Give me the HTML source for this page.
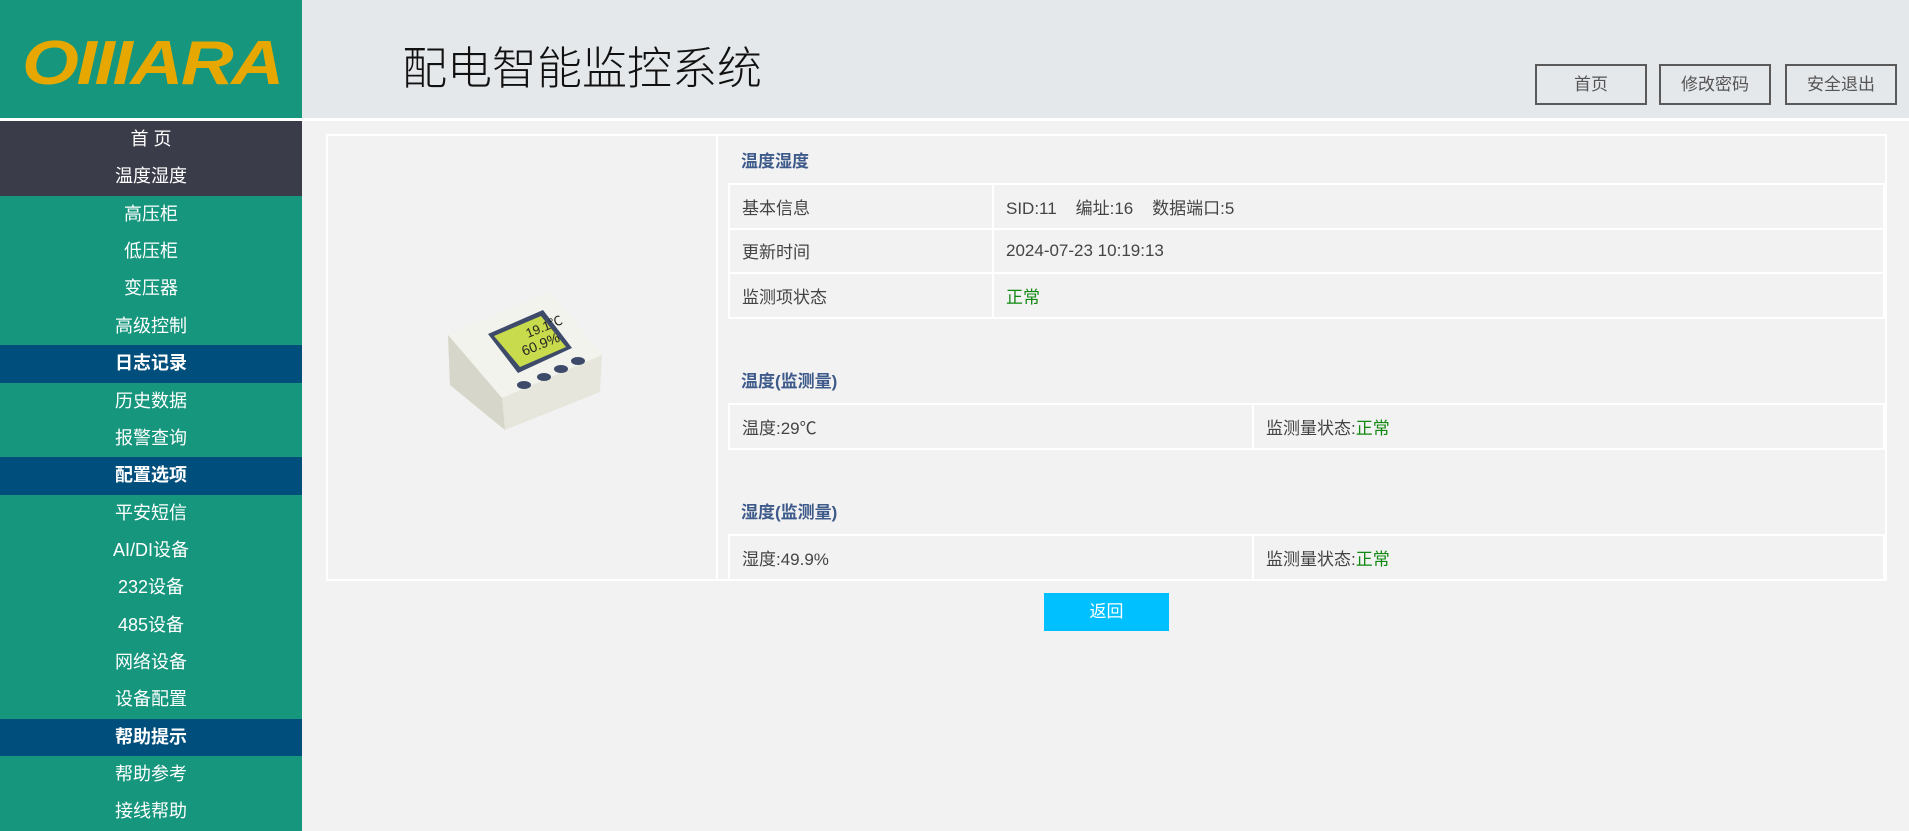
<!DOCTYPE html>
<html><head><meta charset="utf-8"><style>
*{margin:0;padding:0;box-sizing:border-box}
body{width:1909px;height:831px;overflow:hidden;background:#f2f2f2;font-family:"Liberation Sans","Noto Sans CJK SC",sans-serif;position:relative}
.side{position:absolute;left:0;top:0;width:302px;height:831px;background:#16967d}
.logo{position:absolute;left:0;top:0;width:302px;height:118px;background:#16967d}
.logo span{position:absolute;left:22px;top:28px;font:italic bold 62px "Liberation Sans",sans-serif;color:#e6a800;letter-spacing:-2px;transform:scaleX(1.18);transform-origin:left}
.sep{position:absolute;left:0;top:118px;width:1909px;height:3px;background:#fff}
.menu{position:absolute;left:0;top:121px;width:302px}
.menu div{height:37.37px;line-height:37px;text-align:center;color:#fff;font-size:18px}
.menu .d{background:#3b3c4a}
.menu .h{background:#004e7c;font-weight:bold}
.head{position:absolute;left:302px;top:0;width:1607px;height:118px;background:#e5e8eb}
.title{position:absolute;left:402px;top:32px;font-size:45px;color:#111;font-family:"Noto Sans CJK SC",sans-serif;font-weight:300}
.btn{position:absolute;top:64px;width:112px;height:41px;border:2px solid #5a5a5a;text-align:center;line-height:37px;font-size:17px;color:#555}
.box{position:absolute;left:326px;top:134px;width:1561px;height:447px;border:2px solid #fff}
.vl{position:absolute;left:716px;top:134px;width:2px;height:447px;background:#fff}
.h3{position:absolute;left:741px;font-size:17px;font-weight:bold;color:#3d5a8a}
table{position:absolute;left:728px;width:1157px;border-collapse:collapse}
td{border:2px solid #fff;font-size:17px;color:#444;padding-left:12px;height:44.6px;vertical-align:middle}
.g{color:#118811}
.ret{position:absolute;left:1044px;top:593px;width:125px;height:38px;background:#00c0ff;color:#fff;font-size:17px;text-align:center;line-height:38px}
</style></head><body>
<div class="side"></div>
<div class="logo"><span>OIIIARA</span></div>
<div class="head"></div>
<div class="title">配电智能监控系统</div>
<div class="btn" style="left:1535px">首页</div>
<div class="btn" style="left:1659px">修改密码</div>
<div class="btn" style="left:1785px">安全退出</div>
<div class="sep"></div>
<div class="menu">
<div class="d">首 页</div><div class="d">温度湿度</div><div>高压柜</div><div>低压柜</div><div>变压器</div><div>高级控制</div>
<div class="h">日志记录</div><div>历史数据</div><div>报警查询</div><div class="h">配置选项</div><div>平安短信</div><div>AI/DI设备</div><div>232设备</div><div>485设备</div><div>网络设备</div><div>设备配置</div><div class="h">帮助提示</div><div>帮助参考</div><div>接线帮助</div>
</div>
<div class="box"></div><div class="vl"></div>
<svg style="position:absolute;left:440px;top:280px" width="170" height="155" viewBox="0 0 170 155">
<polygon points="8,55 110,12 162,75 160,112 65,150 10,105" fill="#e6e6dc"/>
<polygon points="8,55 110,12 162,75 62,118" fill="#f3f3ee"/>
<polygon points="8,55 62,118 65,150 10,105" fill="#d6d6ca"/>
<polygon points="48,54 103,30 132,68 78,93" fill="#3d4a6a"/>
<polygon points="54,56 101,36 126,67 80,87" fill="#c8db4c"/>
<text x="88" y="58" font-size="13" fill="#222" transform="rotate(-22 88 58)">19.1℃</text>
<text x="84" y="76" font-size="14" fill="#222" transform="rotate(-22 84 76)">60.9%</text>
<ellipse cx="84" cy="105" rx="7" ry="4" fill="#3d4a6a"/><ellipse cx="104" cy="97" rx="7" ry="4" fill="#3d4a6a"/><ellipse cx="121" cy="89" rx="7" ry="4" fill="#3d4a6a"/><ellipse cx="138" cy="81" rx="7" ry="4" fill="#3d4a6a"/>
</svg>
<div class="h3" style="top:147px">温度湿度</div>
<table style="top:183px"><tr><td style="width:264px">基本信息</td><td>SID:11&nbsp;&nbsp;&nbsp;&nbsp;编址:16&nbsp;&nbsp;&nbsp;&nbsp;数据端口:5</td></tr>
<tr><td>更新时间</td><td>2024-07-23 10:19:13</td></tr><tr><td>监测项状态</td><td class="g">正常</td></tr></table>
<div class="h3" style="top:367px">温度(监测量)</div>
<table style="top:403px"><tr><td style="width:524px">温度:29℃</td><td>监测量状态:<span class="g">正常</span></td></tr></table>
<div class="h3" style="top:498px">湿度(监测量)</div>
<table style="top:534px"><tr><td style="width:524px">湿度:49.9%</td><td>监测量状态:<span class="g">正常</span></td></tr></table>
<div class="ret">返回</div>
</body></html>
